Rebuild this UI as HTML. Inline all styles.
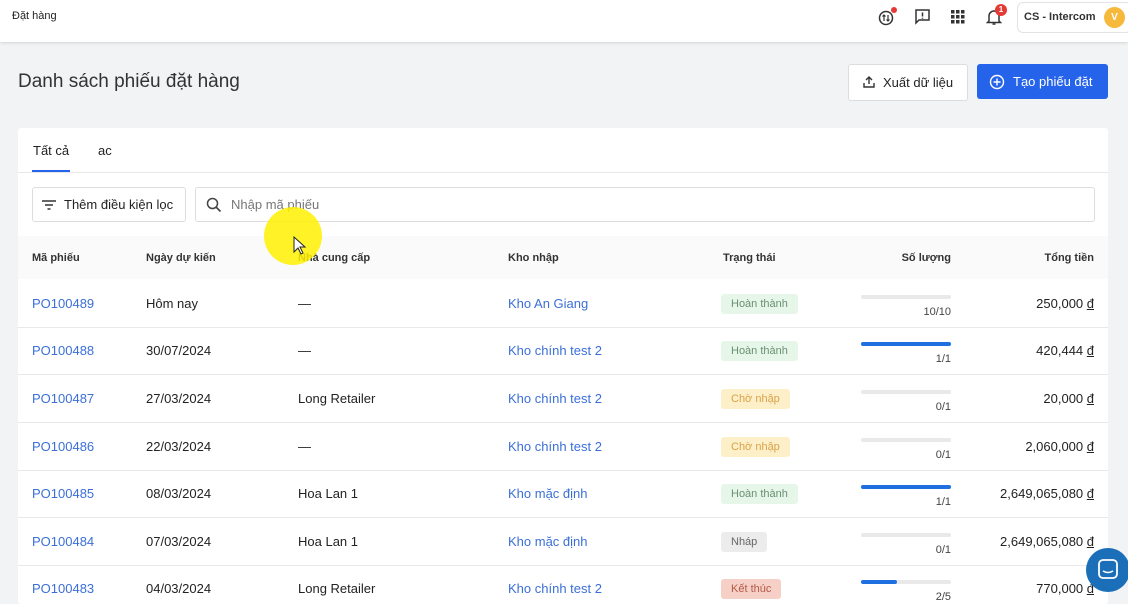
<!DOCTYPE html>
<html><head><meta charset="utf-8"><style>
*{box-sizing:border-box;margin:0;padding:0}
html{width:1128px;height:604px;overflow:hidden}
body{width:1128px;height:604px;overflow:hidden;background:#f1f3f4;font-family:"Liberation Sans",sans-serif;color:#222;position:relative;font-size:13px}
.top{position:absolute;left:0;top:0;width:1128px;height:42px;background:#fff;box-shadow:0 1px 3px rgba(0,0,0,.12)}
.abs{position:absolute}
.card{position:absolute;left:18px;top:128px;width:1090px;height:476px;background:#fff;border-radius:3px;overflow:hidden}
.row{position:absolute;left:0;width:1090px;height:48px;border-bottom:1px solid #e8e8e8}
.row div{position:absolute;top:0;line-height:48px;font-size:13px}
.lnk{color:#3b6fd8}
.tag{position:absolute;top:14px!important;height:20px;line-height:20px!important;padding:0 10px;border-radius:3px;font-size:11px!important}
.bar{position:absolute;left:843px;top:15px;width:90px;height:4px;border-radius:2px;background:#e9e9e9}
.bar i{display:block;height:4px;border-radius:2px;background:#1f6fe0}
.qty{right:157px;top:8px!important;font-size:11px!important;color:#444}
.th{position:absolute;top:124px;font-size:11px;font-weight:bold;color:#333}
u{text-decoration:underline}
</style></head><body>
<div class="top">
<div class="abs" style="left:12px;top:10px;font-size:11px">Đặt hàng</div>
<svg class="abs" style="left:877px;top:6px" width="22" height="22" viewBox="0 0 22 22"><circle cx="9" cy="12" r="6.5" fill="none" stroke="#333" stroke-width="1.5"/><path d="M7 9v6M5.5 10.5L7 9l1.5 1.5M11 15V9M9.5 13.5L11 15l1.5-1.5" stroke="#333" stroke-width="1.2" fill="none"/><circle cx="17" cy="4" r="3" fill="#e53935"/></svg>
<svg class="abs" style="left:914px;top:8px" width="17" height="17" viewBox="0 0 17 17"><path d="M2 2h13v10H5l-3 3z" fill="none" stroke="#333" stroke-width="1.5"/><path d="M8.5 4.5v4M8.5 9.8v1" stroke="#333" stroke-width="1.5"/></svg>
<svg class="abs" style="left:951px;top:10px" width="14" height="14"><g fill="#333"><rect x="0" y="0" width="3.5" height="3.5"/><rect x="5" y="0" width="3.5" height="3.5"/><rect x="10" y="0" width="3.5" height="3.5"/><rect x="0" y="5" width="3.5" height="3.5"/><rect x="5" y="5" width="3.5" height="3.5"/><rect x="10" y="5" width="3.5" height="3.5"/><rect x="0" y="10" width="3.5" height="3.5"/><rect x="5" y="10" width="3.5" height="3.5"/><rect x="10" y="10" width="3.5" height="3.5"/></g></svg>
<svg class="abs" style="left:986px;top:9px" width="16" height="17" viewBox="0 0 16 17"><path d="M3 12V7a5 5 0 0 1 10 0v5l1.5 1.5h-13z" fill="none" stroke="#333" stroke-width="1.5"/><path d="M6.5 15h3" stroke="#333" stroke-width="1.5"/></svg>
<div class="abs" style="left:995px;top:4px;width:12px;height:12px;border-radius:6px;background:#e53935;color:#fff;font-size:8px;line-height:12px;text-align:center;font-weight:bold">1</div>
<div class="abs" style="left:1017px;top:2px;width:115px;height:31px;border:1px solid #e3e3e3;border-radius:6px;background:#fff"><span class="abs" style="left:6px;top:8px;font-size:11px;color:#333;font-weight:bold">CS - Intercom</span><span class="abs" style="left:86px;top:4px;width:21px;height:21px;border-radius:11px;background:#f6b93b;color:#fff;font-size:10px;line-height:21px;text-align:center;font-weight:bold">V</span></div>
</div>
<div class="abs" style="left:18px;top:71px;font-size:19px;color:#333">Danh sách phiếu đặt hàng</div>
<div class="abs" style="left:848px;top:64px;width:120px;height:37px;border:1px solid #ddd;border-radius:3px;background:#fff;font-size:13px;line-height:35px;padding-left:34px">Xuất dữ liệu
<svg class="abs" style="left:14px;top:11px" width="12" height="12"><path d="M1 7v4h10V7M6 8V1M3 4l3-3 3 3" fill="none" stroke="#333" stroke-width="1.4"/></svg></div>
<div class="abs" style="left:977px;top:64px;width:131px;height:35px;border-radius:3px;background:#2563eb;color:#fff;font-size:13px;line-height:35px;padding-left:36px">Tạo phiếu đặt
<svg class="abs" style="left:12px;top:10px" width="16" height="16"><circle cx="8" cy="8" r="6.5" fill="none" stroke="#fff" stroke-width="1.4"/><path d="M8 4.5v7M4.5 8h7" stroke="#fff" stroke-width="1.4"/></svg></div>
<div class="card">
<div class="abs" style="left:15px;top:15px;font-size:13px">Tất cả</div>
<div class="abs" style="left:14px;top:42px;width:38px;height:2px;background:#2563eb"></div>
<div class="abs" style="left:80px;top:15px;font-size:13px">ac</div>
<div class="abs" style="left:0;top:44px;width:1090px;height:1px;background:#e8e8e8"></div>
<div class="abs" style="left:14px;top:59px;width:154px;height:35px;border:1px solid #ddd;border-radius:3px;line-height:33px;padding-left:31px;font-size:13px">Thêm điều kiện lọc
<svg class="abs" style="left:9px;top:12px" width="14" height="10"><path d="M0 1h14M3 5h8M5.5 9h3" stroke="#333" stroke-width="1.5"/></svg></div>
<div class="abs" style="left:177px;top:59px;width:900px;height:35px;border:1px solid #ddd;border-radius:3px;line-height:33px;padding-left:35px;font-size:13px;color:#777">Nhập mã phiếu
<svg class="abs" style="left:10px;top:9px" width="16" height="16"><circle cx="6.5" cy="6.5" r="5" fill="none" stroke="#444" stroke-width="1.5"/><path d="M10 10l4.5 4.5" stroke="#444" stroke-width="1.6"/></svg></div>
<div class="abs" style="left:0;top:108px;width:1090px;height:43px;background:#fafafa"></div>
<div class="th" style="left:14px">Mã phiếu</div><div class="th" style="left:128px">Ngày dự kiến</div><div class="th" style="left:280px">Nhà cung cấp</div><div class="th" style="left:490px">Kho nhập</div><div class="th" style="left:705px">Trạng thái</div><div class="th" style="right:157px">Số lượng</div><div class="th" style="right:14px">Tổng tiền</div>
<div class="row" style="top:152px"><div class="lnk" style="left:14px">PO100489</div><div style="left:128px">Hôm nay</div><div style="left:280px">—</div><div class="lnk" style="left:490px">Kho An Giang</div><div class="tag" style="left:703px;background:#e6f7e9;color:#6b8f73">Hoàn thành</div><span class="bar"><i style="width:0"></i></span><div class="qty" style="right:157px">10/10</div><div style="right:14px">250,000 <u>đ</u></div></div>
<div class="row" style="top:199px"><div class="lnk" style="left:14px">PO100488</div><div style="left:128px">30/07/2024</div><div style="left:280px">—</div><div class="lnk" style="left:490px">Kho chính test 2</div><div class="tag" style="left:703px;background:#e6f7e9;color:#6b8f73">Hoàn thành</div><span class="bar"><i style="width:90px"></i></span><div class="qty" style="right:157px">1/1</div><div style="right:14px">420,444 <u>đ</u></div></div>
<div class="row" style="top:247px"><div class="lnk" style="left:14px">PO100487</div><div style="left:128px">27/03/2024</div><div style="left:280px">Long Retailer</div><div class="lnk" style="left:490px">Kho chính test 2</div><div class="tag" style="left:703px;background:#fdf0c8;color:#d9a24a">Chờ nhập</div><span class="bar"><i style="width:0"></i></span><div class="qty" style="right:157px">0/1</div><div style="right:14px">20,000 <u>đ</u></div></div>
<div class="row" style="top:295px"><div class="lnk" style="left:14px">PO100486</div><div style="left:128px">22/03/2024</div><div style="left:280px">—</div><div class="lnk" style="left:490px">Kho chính test 2</div><div class="tag" style="left:703px;background:#fdf0c8;color:#d9a24a">Chờ nhập</div><span class="bar"><i style="width:0"></i></span><div class="qty" style="right:157px">0/1</div><div style="right:14px">2,060,000 <u>đ</u></div></div>
<div class="row" style="top:342px"><div class="lnk" style="left:14px">PO100485</div><div style="left:128px">08/03/2024</div><div style="left:280px">Hoa Lan 1</div><div class="lnk" style="left:490px">Kho mặc định</div><div class="tag" style="left:703px;background:#e6f7e9;color:#6b8f73">Hoàn thành</div><span class="bar"><i style="width:90px"></i></span><div class="qty" style="right:157px">1/1</div><div style="right:14px">2,649,065,080 <u>đ</u></div></div>
<div class="row" style="top:390px"><div class="lnk" style="left:14px">PO100484</div><div style="left:128px">07/03/2024</div><div style="left:280px">Hoa Lan 1</div><div class="lnk" style="left:490px">Kho mặc định</div><div class="tag" style="left:703px;background:#ececec;color:#666">Nháp</div><span class="bar"><i style="width:0"></i></span><div class="qty" style="right:157px">0/1</div><div style="right:14px">2,649,065,080 <u>đ</u></div></div>
<div class="row" style="top:437px"><div class="lnk" style="left:14px">PO100483</div><div style="left:128px">04/03/2024</div><div style="left:280px">Long Retailer</div><div class="lnk" style="left:490px">Kho chính test 2</div><div class="tag" style="left:703px;background:#f6cfc6;color:#b45a48">Kết thúc</div><span class="bar"><i style="width:36px"></i></span><div class="qty" style="right:157px">2/5</div><div style="right:14px">770,000 <u>đ</u></div></div>
</div>
<div class="abs" style="left:264px;top:207px;width:58px;height:58px;border-radius:29px;background:rgba(255,240,0,.85)"></div>
<svg class="abs" style="left:293px;top:236px" width="14" height="20"><path d="M1 1v15l4-4 3 6 2-1-3-6h5z" fill="#fff" stroke="#222" stroke-width="1"/></svg>
<div class="abs" style="left:1086px;top:548px;width:44px;height:44px;border-radius:22px;background:#1b6fb8"><svg class="abs" style="left:12px;top:11px" width="20" height="20"><rect x="1" y="1" width="18" height="18" rx="4" fill="none" stroke="#fff" stroke-width="1.8"/><path d="M5 12q5 3 10 0" stroke="#fff" stroke-width="1.6" fill="none"/></svg></div>
</body></html>
